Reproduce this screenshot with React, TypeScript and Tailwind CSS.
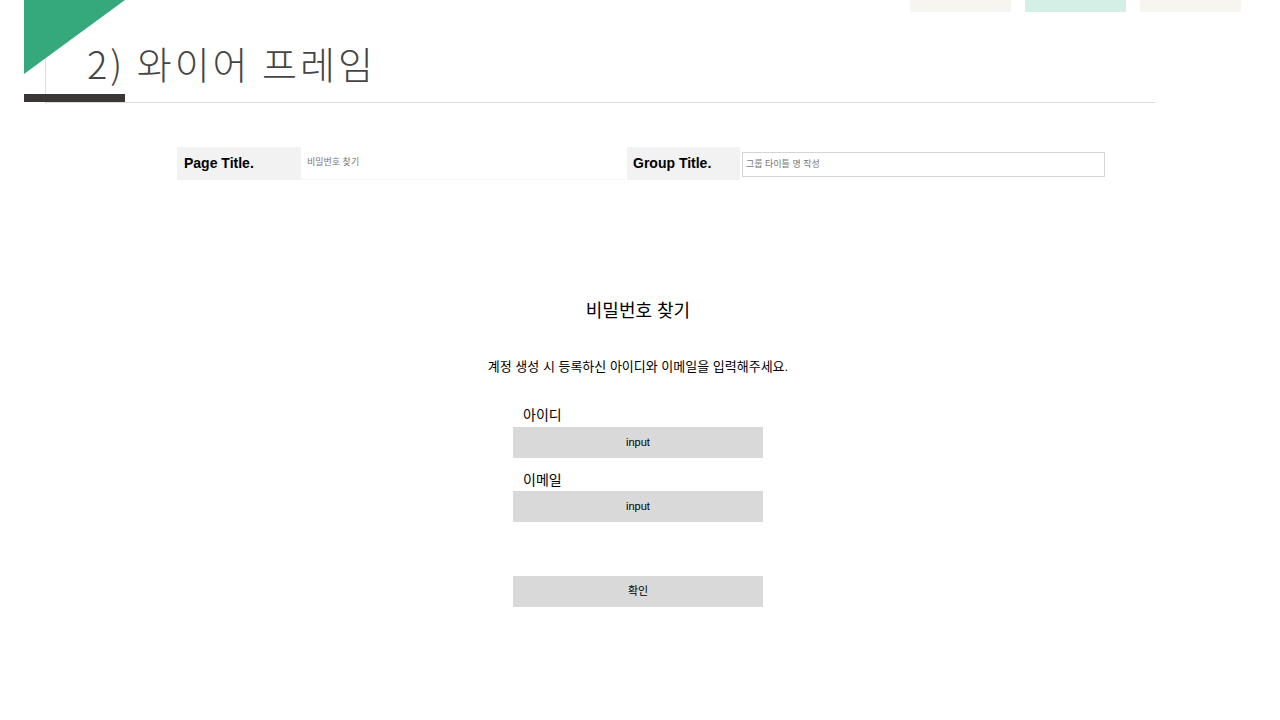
import React from "react";

const sans = { fontFamily: '"Liberation Sans", Arial, "Noto Sans CJK KR", sans-serif' };

export default function App() {
  return (
    <div className="relative w-[1280px] h-[720px] bg-white overflow-hidden" style={sans}>
      {/* header */}
      <div className="relative h-[104px]">
        <div className="absolute left-[45px] top-0 w-px h-[104px] bg-[#dcdcdc]" />
        <svg className="absolute left-[24px] top-0" width="101" height="75" viewBox="0 0 101 75">
          <polygon points="0,0 101,0 0,74" fill="#35a97c" />
        </svg>
        <div className="absolute left-[24px] top-[94px] w-[101px] h-[8px] bg-[#3b3636]" />
        <div className="absolute left-[45px] top-[102px] w-[1110px] h-px bg-[#dcdcdc]" />
        <div
          className="absolute left-[87px] top-[38px] text-[38px] leading-[50px] font-light text-[#454545] tracking-[3px]"
          style={{ fontFamily: '"Noto Sans CJK KR", sans-serif', fontWeight: 300 }}
        >
          2) 와이어 프레임
        </div>
        <div className="absolute top-0 left-[910px] flex gap-[14px]">
          <div className="w-[101px] h-[12px] bg-[#f7f5f0]" />
          <div className="w-[101px] h-[12px] bg-[#d4f0e6]" />
          <div className="w-[101px] h-[12px] bg-[#f7f5f0]" />
        </div>
      </div>

      {/* title row */}
      <div className="flex mt-[43px] ml-[177px] h-[33px]">
        <div className="w-[124px] bg-[#f2f2f2] flex items-center pl-[7px] text-[14px] font-bold text-black">
          Page Title.
        </div>
        <div className="w-[324px] flex items-center pl-[6px] text-[9px] text-[#777] border-b border-[#f7f7f7]">
          비밀번호 찾기
        </div>
        <div className="w-[2px]" />
        <div className="w-[113px] bg-[#f2f2f2] flex items-center pl-[6px] text-[14px] font-bold text-black">
          Group Title.
        </div>
        <div className="ml-[2px] mt-[5px] w-[363px] h-[25px] border border-[#d5d5d5] flex items-center pl-[3px] text-[9px] text-[#777]">
          그룹 타이틀 명 작성
        </div>
      </div>

      {/* form */}
      <div className="w-[1276px] flex flex-col items-center">
        <div className="mt-[119px] text-[18px] leading-[24px] text-black">비밀번호 찾기</div>
        <div className="mt-[35px] text-[13px] leading-[18px] text-black">
          계정 생성 시 등록하신 아이디와 이메일을 입력해주세요.
        </div>
        <div className="mt-[30px] w-[250px] flex flex-col">
          <div className="pl-[10px] text-[14px] leading-[18px] text-black">아이디</div>
          <div className="mt-[3px] h-[31px] bg-[#d9d9d9] flex items-center justify-center text-[11px] text-black">
            input
          </div>
          <div className="mt-[13px] pl-[10px] text-[14px] leading-[18px] text-black">이메일</div>
          <div className="mt-[2px] h-[31px] bg-[#d9d9d9] flex items-center justify-center text-[11px] text-black">
            input
          </div>
          <div className="mt-[54px] h-[31px] bg-[#d9d9d9] flex items-center justify-center text-[11px] text-black">
            확인
          </div>
        </div>
      </div>
    </div>
  );
}
